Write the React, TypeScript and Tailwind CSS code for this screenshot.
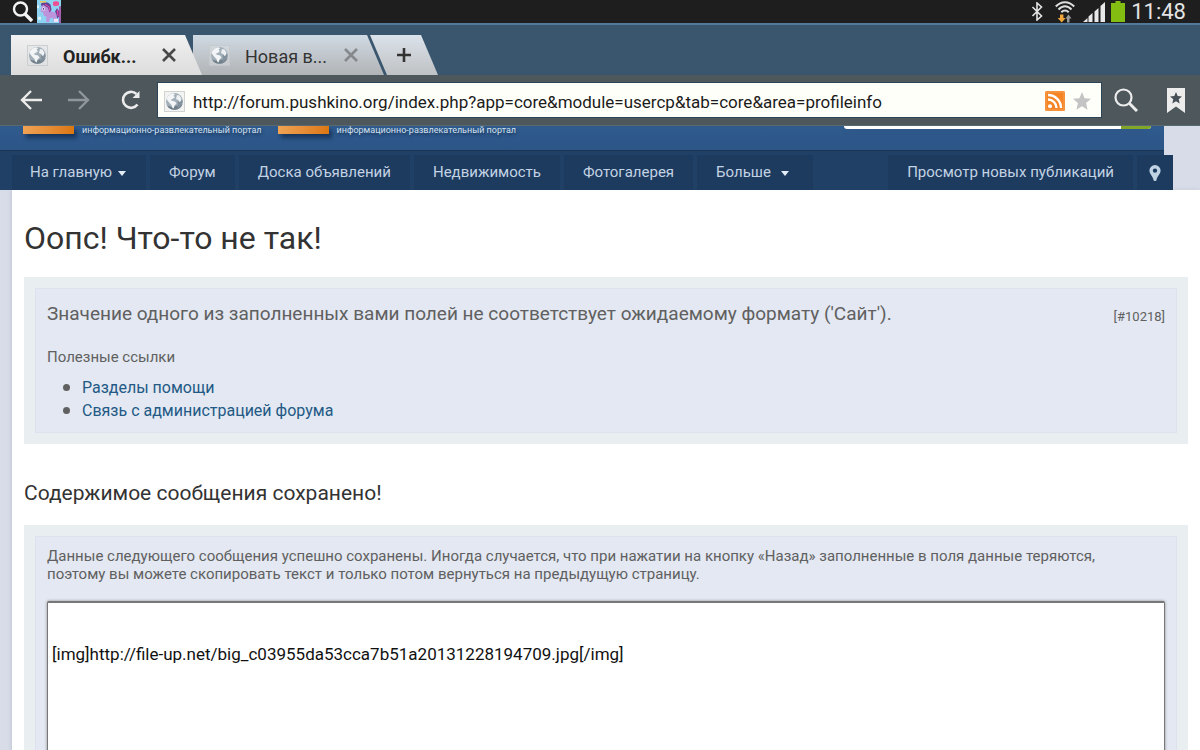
import type { ReactNode } from 'react';

const NAV_LINKS = ['Форум', 'Доска объявлений', 'Недвижимость', 'Фотогалерея'];

const HELP_LINKS = ['Разделы помощи', 'Связь с администрацией форума'];

const SAVED_MESSAGE = '\n\n[img]http://file-up.net/big_c03955da53cca7b51a20131228194709.jpg[/img]';

function GlobeIcon() {
  return (
    <svg className="size-[21px] shrink-0" viewBox="0 0 21 21" aria-hidden="true">
      <rect x="0.5" y="0.5" width="20" height="20" fill="#e2e4e5" fillOpacity="0.4" stroke="#c6c9cb" strokeOpacity="0.8" />
      <circle cx="10.500" cy="10.500" r="8.500" fill="#a3b0b9" />
      <path d="M3 14.500a8.500 8.500 0 0 0 15.500-1.500c-2 1.500-4 2-6 1.500-3 1.500-6.500 1.500-9.500 0z" fill="#71808b" />
      <path d="M14 4.500c3 1.500 4.500 4 4.500 6.500-.5 3-2.500 5-5 6.500z" fill="#82919c" />
      <path d="M2.500 7.500C4 4.500 6.500 2.500 9.500 2.300l1.500 1-1.500 1.500 1.500 1.500-2.500 1.700-2 1 1.500.8 3 .7 1.500 2-2 2-.8 3-1.500-1-.7-2.500-2-2-2-2.500z" fill="#f3f5f6" />
      <path d="M13 4l2.500.5 2 3-.5 2.500-1.500 1-1.500-2-2-1 .5-2z" fill="#eef1f3" />
    </svg>
  );
}

function CloseIcon() {
  return (
    <svg className="size-4" viewBox="0 0 16 16" fill="none" stroke="currentColor" strokeWidth="2.6" aria-hidden="true">
      <path d="M2 2l12 12M14 2L2 14" />
    </svg>
  );
}

function PonyIcon() {
  return (
    <svg className="h-[23px] w-6" viewBox="0 0 24 22" preserveAspectRatio="none" aria-hidden="true">
      <rect width="24" height="22" fill="#8fd3f3" />
      <path d="M0 5h2v3H0zM20 10h4v3h-4zM1 16h3v3H1z" fill="#d9f2fb" />
      <path d="M5 4c3-2 6-1 8 1l1 6 4 1 2 3-1 1 1 5h-3l-1-4-3 .5-1 3.500h-3l.5-5-2.500-1-1-3-2.500-1z" fill="#bd93dc" />
      <path d="M4 3.500c3-2 7-2 9.500 1l1 5-2 2.500-1.500-4.500-2.500-1.500-2-1.500-2 1.500z" fill="#5b3f96" />
      <path d="M18 11l2-3 2.500 3-.5 5-2 2-.5-4z" fill="#6b3f9a" />
      <path d="M8 4l4 2.500 1 4M20.500 9.500l.5 6" stroke="#e0489c" strokeWidth="1.200" fill="none" />
      <circle cx="6.500" cy="8.500" r="1.500" fill="#fff" />
      <circle cx="6.500" cy="8.500" r="0.800" fill="#42307f" />
      <path d="M16 2l3-1 3 1v3l-4 1-2-1z" fill="#ee4f94" />
      <path d="M3 1h6v1.500H3z" fill="#e5c95a" />
      <path d="M17 18h4v3h-4z" fill="#f3e3f4" />
      <path d="M23 6v16" stroke="#a43a9c" strokeWidth="1.500" />
    </svg>
  );
}

function StatusBar() {
  return (
    <div className="flex h-[23px] shrink-0 items-center justify-between bg-[#1e1e1e] pl-3 pr-3.5 text-[#e4e4e4]">
      <div className="flex items-center gap-1">
        <svg className="size-[21px]" viewBox="0 0 21 21" fill="none" stroke="#f4f4f4" aria-hidden="true">
          <circle cx="8.500" cy="8" r="6.500" strokeWidth="2.400" />
          <path d="M13 13l7 7" strokeWidth="3.400" />
        </svg>
        <PonyIcon />
      </div>
      <div className="flex items-center">
        <svg className="mr-3 h-[19px] w-3" viewBox="0 0 12 19" fill="none" stroke="currentColor" strokeWidth="1.600" aria-hidden="true">
          <path d="M1.500 5l9 9L6 18V1l4.500 4-9 9" />
        </svg>
        <svg className="mr-2 h-[22px] w-5" viewBox="0 0 20 22" fill="none" aria-hidden="true">
          <g stroke="#dedede" strokeWidth="2">
            <path d="M.8 5.500C6-.3 14-.3 19.200 5.500" />
            <path d="M3.500 8.500c4-4.300 9-4.300 13 0" />
            <path d="M6.300 11.300c2.300-2.400 5.100-2.400 7.400 0" />
          </g>
          <path d="M5 13.500h3.400v3.500h2.300L6.700 21.500 2.700 17H5z" fill="#f0a63a" />
          <path d="M12 21.500h2.500v-4h2L13.500 13.500l-3 4H12z" fill="#9a9a9a" />
        </svg>
        <svg className="mr-1.5 h-5 w-[22px]" viewBox="0 0 22 20" fill="#e8e8e8" aria-hidden="true">
          <path d="M0 20l4.500-4v4zM5.500 14.500l4-3.500v9h-4zM11.500 9.500l4-3.500v14h-4zM17.500 4L22 0v20h-4.500z" />
        </svg>
        <svg className="mr-1.5 h-[21px] w-3.5" viewBox="0 0 14 21" fill="#84bd12" aria-hidden="true">
          <path d="M4.500 0h5v2H14v19H0V2h4.500z" />
        </svg>
        <span className="text-[22px] leading-none">11:48</span>
      </div>
    </div>
  );
}

type TabProps = {
  title: string;
  active?: boolean;
};

function BrowserTab({ title, active }: TabProps) {
  return (
    <div
      className={`flex h-10 w-[191px] items-center pl-4 pr-[25px] text-lg [clip-path:polygon(0_0,174px_0,100%_100%,0_100%)] ${
        active
          ? 'relative z-10 bg-gradient-to-b from-[#f1f1f1] to-[#dcdcdc] font-bold text-[#222]'
          : '-ml-[9px] bg-gradient-to-b from-[#d0d9e3] to-[#b1b4b6] text-[#333]'
      }`}
    >
      <GlobeIcon />
      <span className="ml-[15px] flex-1 whitespace-nowrap pt-1">{title}</span>
      <button type="button" aria-label="Закрыть вкладку" className={active ? 'text-[#484848]' : 'text-[#85898c]'}>
        <CloseIcon />
      </button>
    </div>
  );
}

function TabBar() {
  return (
    <div className="flex h-[52px] shrink-0 items-end border-t-2 border-[#547a9b] bg-[#3a566f] pl-[11px]">
      <BrowserTab title="Ошибк..." active />
      <BrowserTab title="Новая в..." />
      <button
        type="button"
        aria-label="Новая вкладка"
        className="-ml-3.5 flex h-10 w-[68px] items-center justify-center bg-gradient-to-b from-[#dbe2ea] to-[#bfc2c4] text-[#333] [clip-path:polygon(0_0,51px_0,100%_100%,17px_100%)]"
      >
        <svg className="size-4" viewBox="0 0 16 16" stroke="currentColor" strokeWidth="2.600" aria-hidden="true">
          <path d="M8 1v14M1 8h14" />
        </svg>
      </button>
    </div>
  );
}

function Toolbar() {
  return (
    <div className="flex h-[51px] shrink-0 items-center border-b border-[#596972] bg-[#4d575c] pl-5 pr-3.5 text-[#ececec]">
      <button type="button" aria-label="Назад">
        <svg className="h-5 w-[22px]" viewBox="0 0 22 20" fill="none" stroke="currentColor" strokeWidth="2.400" aria-hidden="true">
          <path d="M22 10H2M11 1L2 10l9 9" />
        </svg>
      </button>
      <button type="button" aria-label="Вперёд" className="ml-[26px] text-[#8f979b]">
        <svg className="h-5 w-[22px]" viewBox="0 0 22 20" fill="none" stroke="currentColor" strokeWidth="2.400" aria-hidden="true">
          <path d="M0 10h20M11 1l9 9-9 9" />
        </svg>
      </button>
      <button type="button" aria-label="Обновить" className="ml-[31px]">
        <svg className="size-5" viewBox="0 0 20 20" fill="none" stroke="currentColor" strokeWidth="2.600" aria-hidden="true">
          <path d="M16.500 14.500A8 8 0 1 1 15.500 4" />
          <path d="M18.500 1v7h-7z" fill="currentColor" stroke="none" />
        </svg>
      </button>
      <div className="ml-4 flex h-9 flex-1 items-center border border-[#2c4457] bg-[#fffffa] pl-1.5 pr-2.5 pt-0.5">
        <GlobeIcon />
        <input
          type="text"
          aria-label="Адрес"
          defaultValue="http://forum.pushkino.org/index.php?app=core&module=usercp&tab=core&area=profileinfo"
          className="ml-2 min-w-0 flex-1 bg-transparent pt-1 text-[17px] text-[#1b1b1b] outline-none"
        />
        <button type="button" aria-label="RSS">
          <svg className="size-5" viewBox="0 0 20 20" fill="none" aria-hidden="true">
            <rect width="20" height="20" rx="1.500" fill="#f58426" />
            <rect x="1" y="1" width="18" height="18" stroke="#f8a560" strokeWidth="0.800" />
            <circle cx="5" cy="15.200" r="2" fill="#fff" />
            <path d="M3 8.500a8.500 8.500 0 0 1 8.500 8.500M3 4a13 13 0 0 1 13 13" stroke="#fff" strokeWidth="2.400" />
          </svg>
        </button>
        <button type="button" aria-label="В закладки" className="ml-2">
          <svg className="size-[18px]" viewBox="0 0 18 18" fill="#c4c4c4" aria-hidden="true">
            <path d="M9 0l2.600 6.200 6.400.6-4.900 4.300 1.500 6.600L9 14.200l-5.600 3.500 1.500-6.600L0 6.800l6.400-.6z" />
          </svg>
        </button>
      </div>
      <button type="button" aria-label="Поиск" className="ml-3">
        <svg className="size-6" viewBox="0 0 24 24" fill="none" stroke="currentColor" aria-hidden="true">
          <circle cx="9.500" cy="9.500" r="8" strokeWidth="2.200" />
          <path d="M15.500 15.500l7.500 7.500" strokeWidth="3" />
        </svg>
      </button>
      <button type="button" aria-label="Закладки" className="ml-7">
        <svg className="h-[25px] w-5" viewBox="0 0 20 25" aria-hidden="true">
          <path d="M1 0h18v25l-9-6.500L1 25z" fill="#ececec" />
          <path d="M10 4l1.700 4 4.300.4-3.300 2.800 1 4.300-3.700-2.300-3.700 2.300 1-4.300L4 8.400 8.300 8z" fill="#454f55" />
        </svg>
      </button>
    </div>
  );
}

function PortalLogo() {
  return (
    <a href="#" className="flex items-start gap-2">
      <span className="h-2 w-[51px] bg-gradient-to-r from-[#efa353] to-[#dc770f] shadow-[3px_4px_4px_#17365c]" />
      <span className="whitespace-nowrap text-[9px] leading-2 text-[#d3e0ee] [text-shadow:1px_2px_3px_#17365c]">
        информационно-развлекательный портал
      </span>
    </a>
  );
}

function NavItem({ children, className = 'px-[19px]' }: { children: ReactNode; className?: string }) {
  return (
    <a href="#" className={`flex items-center whitespace-nowrap bg-[#1d3a5f] ${className}`}>
      {children}
    </a>
  );
}

function Caret() {
  return (
    <svg className="mt-0.5 h-[5px] w-2" viewBox="0 0 8 5" fill="#e4edf6" aria-hidden="true">
      <path d="M0 0h8L4 5z" />
    </svg>
  );
}

function SiteHeader() {
  return (
    <header className="relative z-10 mr-9">
      <div className="flex h-6 items-start bg-gradient-to-b from-[#305b8d] to-[#2c5588] pl-[23px] pr-[13px]">
        <PortalLogo />
        <div className="ml-4">
          <PortalLogo />
        </div>
        <div className="ml-auto flex h-[3px] w-[307px] overflow-hidden rounded-b-sm bg-white shadow-md">
          <span className="ml-auto w-[30px] bg-[#83a528]" />
        </div>
      </div>
      <nav className="flex h-10 border-t border-[#1b3555] bg-[#204066] pl-3 pt-1 text-[15px] text-[#c3d3e3]">
        <div className="-mr-9 flex flex-1 gap-1 pr-[27px]">
          <NavItem className="gap-1.5 pl-[18px] pr-5">
            На главную <Caret />
          </NavItem>
          {NAV_LINKS.map((label) => (
            <NavItem key={label}>{label}</NavItem>
          ))}
          <NavItem className="gap-2.5 pl-[19px] pr-6">
            Больше <Caret />
          </NavItem>
          <div className="ml-auto flex gap-1">
            <NavItem>Просмотр новых публикаций</NavItem>
            <NavItem className="px-3">
              <svg className="h-4 w-3" viewBox="0 0 12 16" fill="#bfd3e4" aria-label="Навигация">
                <path
                  fillRule="evenodd"
                  d="M6 0a5.600 5.600 0 0 0-5.600 5.600C.4 9 4 11.500 4.500 15c.2 1.300 2.800 1.300 3 0 .5-3.500 4.100-6 4.100-9.400A5.600 5.600 0 0 0 6 0zm0 3.400a2.200 2.200 0 1 1 0 4.400 2.200 2.200 0 0 1 0-4.400z"
                />
              </svg>
            </NavItem>
          </div>
        </div>
      </nav>
    </header>
  );
}

function Panel({ children }: { children: ReactNode }) {
  return (
    <section className="bg-[#e9eff1] p-[11px]">
      <div className="border border-[#dce3ee] bg-[#e3e8f2] px-[11px] pt-2.5">{children}</div>
    </section>
  );
}

export default function App() {
  return (
    <div className="flex h-screen flex-col overflow-hidden font-[Roboto,sans-serif]">
      <StatusBar />
      <TabBar />
      <Toolbar />
      <div className="flex-1 overflow-hidden bg-[#d8dce8]">
        <SiteHeader />
        <main className="ml-3 bg-white px-3 pb-6 pt-7 text-[15px] text-[#606060] shadow-[-1px_0_4px_#c3c8d6]">
          <h1 className="text-[32px] leading-10 text-[#333]">Оопс! Что-то не так!</h1>
          <div className="mt-[19px]">
            <Panel>
              <div className="flex items-center justify-between border-b border-[#e5e9ee] pb-1">
                <p className="text-[19px] leading-[30px]">
                  Значение одного из заполненных вами полей не соответствует ожидаемому формату ('Сайт').
                </p>
                <span className="mt-1.5 text-[13px]">[#10218]</span>
              </div>
              <h3 className="mt-[11px] leading-6">Полезные ссылки</h3>
              <ul className="mt-[7px] pb-2.5 text-base leading-[23px]">
                {HELP_LINKS.map((label) => (
                  <li key={label} className="flex items-center gap-3 pl-4">
                    <span className="size-[7px] rounded-full bg-[#606060]" />
                    <a href="#" className="text-[#225985]">
                      {label}
                    </a>
                  </li>
                ))}
              </ul>
            </Panel>
          </div>
          <h2 className="mb-4 mt-[33px] text-[21px] leading-8 text-[#333]">Содержимое сообщения сохранено!</h2>
          <Panel>
            <label htmlFor="saved-message" className="block leading-[18px]">
              Данные следующего сообщения успешно сохранены. Иногда случается, что при нажатии на кнопку «Назад»
              заполненные в поля данные теряются,
              <br />
              поэтому вы можете скопировать текст и только потом вернуться на предыдущую страницу.
            </label>
            <textarea
              id="saved-message"
              defaultValue={SAVED_MESSAGE}
              className="mt-[18px] block h-60 w-full resize-none rounded-xs border border-t-2 border-[#777] bg-white p-1 text-[17px] leading-[19px] text-[#111] shadow-[0_0_3px_#888] outline-none"
            />
          </Panel>
        </main>
      </div>
    </div>
  );
}
